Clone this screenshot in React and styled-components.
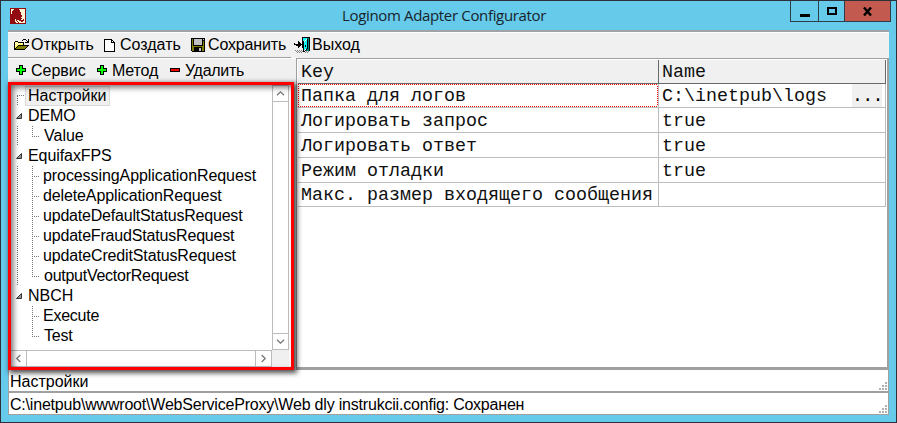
import React from "react";
import styled, { createGlobalStyle } from "styled-components";

const sans = '"Liberation Sans", Arial, sans-serif';

const GlobalStyle = createGlobalStyle`
  * { box-sizing: border-box; }
  body { margin: 0; overflow: hidden; }
`;

const Window = styled.div`
  width: 897px;
  height: 423px;
  padding: 0 7px 7px;
  border: 1px solid #2d3038;
  background: #66caea;
  color: #000;
  font: 16px/20px ${sans};
  white-space: nowrap;
  display: flex;
  flex-direction: column;
`;

const TitleBar = styled.header`
  position: relative;
  height: 29px;
  flex: none;
  display: flex;
  align-items: center;
  padding-left: 2px;
`;

const Title = styled.h1`
  flex: 1;
  margin: 0 27px 0 0;
  text-align: center;
  font: 400 15px/28px "Open Sans", "Noto Sans", sans-serif;
  letter-spacing: -0.34px;
  padding-bottom: 1px;
  color: #17242b;
`;

const Controls = styled.div`
  position: absolute;
  top: 0;
  right: -2px;
  display: flex;
  height: 21px;
  border: 1px solid #2d3e48;
  border-top: 0;
`;

const Control = styled.button`
  width: ${(p) => p.$width}px;
  padding: 0;
  border: 0;
  border-left: ${(p) => (p.$first ? 0 : "1px solid #2d3e48")};
  background: ${(p) => (p.$danger ? "#c35a50" : "transparent")};
  display: flex;
  align-items: center;
  justify-content: center;
`;

const Client = styled.main`
  width: 881px;
  height: 385px;
  display: flex;
  flex-direction: column;
  background: #f0f0f0;
  border-top: 2px solid #a0a3a6;
`;

const Toolbar = styled.div`
  display: flex;
  align-items: center;
  height: ${(p) => p.$height}px;
  padding-left: ${(p) => p.$start}px;
  border-top: 1px solid #fff;
`;

const Tool = styled.button`
  display: flex;
  align-items: center;
  gap: ${(p) => p.$gap}px;
  width: ${(p) => p.$width}px;
  height: 20px;
  padding: 0;
  border: 0;
  background: none;
  color: #000;
  font: inherit;
  letter-spacing: ${(p) => p.$spacing || 0}px;
`;

const Icon = styled.svg`
  display: block;
  flex: none;
  shape-rendering: crispEdges;
`;

const Workspace = styled.div`
  display: flex;
  height: 313px;
`;

const LeftPane = styled.section`
  width: 288px;
  flex: none;
`;

const Rule = styled.div`
  width: 283px;
  height: 1px;
  background: #a0a0a0;
`;

const TreeFrame = styled.div`
  position: relative;
  z-index: 1;
  width: 286px;
  height: 288px;
  border: 3px solid #f00;
  box-shadow: 2px 2px 5px 1px rgba(0, 0, 0, 0.7);
  background: #fff;
  display: grid;
  grid-template: 265px 17px / 261px 19px;

  &::after {
    content: "";
    position: absolute;
    inset: 0;
    box-shadow: inset 3px 3px 6px -1px rgba(0, 0, 0, 0.6);
    pointer-events: none;
  }
`;

const Tree = styled.ul`
  margin: 0;
  padding: 1px 0 0 5px;
  list-style: none;
`;

const TreeRow = styled.li`
  height: 20px;
  display: flex;
  align-items: center;
`;

const Branch = styled.svg`
  width: ${(p) => (p.$child ? 27 : 12)}px;
  height: 20px;
  flex: none;
`;

const TreeLabel = styled.span`
  height: 20px;
  padding: 0 3px 0 ${(p) => (p.$selected ? 2 : 0)}px;
  margin-left: ${(p) => p.$offset || 0}px;
  border: ${(p) => (p.$selected ? "1px solid #dadada" : 0)};
  background: ${(p) => (p.$selected ? "#f0f0f0" : "transparent")};
  line-height: ${(p) => (p.$selected ? 18 : 20)}px;
  letter-spacing: ${(p) => p.$spacing || 0}px;
`;

const Scrollbar = styled.div`
  display: flex;
  flex-direction: ${(p) => (p.$vertical ? "column" : "row")};
  justify-content: space-between;
  width: ${(p) => (p.$vertical ? 17 : 261)}px;
  height: ${(p) => (p.$vertical ? 265 : 17)}px;
  border: 1px solid #bcbcbc;
  border-left-width: ${(p) => (p.$vertical ? 1 : 0)}px;
`;

const ScrollButton = styled.span`
  width: 15px;
  height: 15px;
  display: flex;
  align-items: center;
  justify-content: center;
  box-shadow: ${(p) => p.$edge} 0 0 #bcbcbc;
`;

const Corner = styled.div`
  width: 17px;
  height: 17px;
  background: #f0f0f0;
`;

const GridPanel = styled.section`
  width: 593px;
  height: 312px;
  margin-top: 1px;
  border: 1px solid #a0a0a0;
  border-right-width: 2px;
  border-bottom-width: 3px;
  background: #fff;
  padding: 1px 0 0 1px;
`;

const Table = styled.div`
  display: grid;
  grid-template-columns: 361px 227px;
  grid-template-rows: 24px 24px 25px 25px 25px 24px;
  width: 588px;
  font: 18.33px/25px "Liberation Mono", "Courier New", monospace;
`;

const Cell = styled.div`
  position: relative;
  display: flex;
  justify-content: space-between;
  min-width: 0;
  padding-left: 3px;
  border-right: 1px solid ${(p) => (p.$header ? "#696969" : "#bdbdbd")};
  border-bottom: 1px solid ${(p) => (p.$header ? "#696969" : "#bdbdbd")};
  background: ${(p) => (p.$header ? "#f0f0f0" : "#fff")};
  color: #101010;
  line-height: ${(p) => (p.$tall ? 27 : 25)}px;
`;

const dotsX = "repeating-linear-gradient(90deg, #f00 0 1px, #fff 1px 2px)";
const dotsY = "repeating-linear-gradient(180deg, #f00 0 1px, #fff 1px 2px)";

const FocusRing = styled.i`
  position: absolute;
  inset: 0;
  background:
    ${dotsX} 0 0 / 100% 1px no-repeat,
    ${dotsX} 0 100% / 100% 1px no-repeat,
    ${dotsY} 0 0 / 1px 100% no-repeat,
    ${dotsY} 100% 0 / 1px 100% no-repeat;
`;

const Ellipsis = styled.button`
  width: 30px;
  height: 23px;
  margin-right: 3px;
  border: 0;
  padding: 0;
  background: #f0f0f0;
  color: #000;
  font: inherit;
  letter-spacing: -0.8px;
  text-align: left;
`;

const Status = styled.footer`
  display: flex;
  justify-content: space-between;
  align-items: flex-end;
  height: ${(p) => p.$height}px;
  padding-left: 1px;
  border: 1px solid #a0a0a0;
  border-top: 0;
  border-bottom-width: ${(p) => p.$bottom}px;
  background: #fff;
  line-height: 18px;
  letter-spacing: ${(p) => p.$spacing || 0}px;
`;

function AppLogo() {
  return (
    <Icon width="16" height="16" viewBox="0 0 16 16">
      <path fill="#930b12" d="M0 0h16v16H0z" />
      <path fill="#fff4cf" d="M1 1h14v14H1z" />
      <path fill="#930b12" d="M4 1h5v1h1v2h1v3h1v2h-1v1h1v1h-1v1h2v-1h1v2h-1v1h-2v-1H9v-1H7v1h1v1h1v1H1V6h1V3h1V2h1z" />
      <path fill="#fff4cf" d="M5 11h1v2h1v1h1v1H6v-1H5z" />
    </Icon>
  );
}

function FolderIcon() {
  return (
    <Icon width="16" height="16" viewBox="0 0 16 16">
      <path fill="#000" d="M9 2h3v1H9zM8 3h1v1H8zM12 3h1v1h-1zM14 2h1v4h-4V5h2V4h1zM1 4h3v1H1zM0 5h1v8H0zM4 5h6v3h5v1h-1v1h-1v1h-1v1h-1v1H0v-1h1v-1h1v-1h1V9h1V8h5V6H4z" />
      <path fill="#ffff55" d="M1 5h3v1h5v2H4v1H3v1H2v1H1z" />
      <path fill="#fff" d="M2 5h1v1H2zM1 6h1v1H1zM3 6h1v1H3zM5 6h1v1H5zM7 6h1v1H7zM2 7h1v1H2zM4 7h1v1H4zM1 8h1v1H1z" />
      <path fill="#808000" d="M4 9h9v1h-1v1h-1v1H2v-1h1v-1h1z" />
    </Icon>
  );
}

function PageIcon() {
  return (
    <Icon width="11" height="13" viewBox="0 0 11 13">
      <path fill="#000" d="M0 0h8v1h1v1h1v1h1v10H0z" />
      <path fill="#fff" d="M1 1h6v3h3v8H1zM8 2h1v1H8z" />
    </Icon>
  );
}

function DiskIcon() {
  return (
    <Icon width="14" height="14" viewBox="0 0 14 14">
      <path fill="#000" d="M0 0h14v14H1v-1H0z" />
      <path fill="#808000" d="M1 1h1v7h10V3h1v10h-2V9H3v4H1z" />
      <path fill="#c0c0c0" d="M3 1h8v6H3zM12 1h1v1h-1zM8 10h2v3H8z" />
    </Icon>
  );
}

function DoorIcon() {
  return (
    <Icon width="17" height="16" viewBox="0 0 17 16">
      <path fill="#000" d="M8 0h8v14h-1V1H9v10H8zM4 4h1v1h1v1h1v1h1v1H7v1H6v1H5v1H4V9H2V8H0V6h1v1h3z" />
      <path fill="#008080" d="M13 1h2v13h-3V4h1z" />
      <path fill="#0ff" d="M9 1h4v1h-1v1h-1v1h-1v1H9zM10 5h1V4h1V3h1v8h-1v1h-1v1h-1z" />
      <path fill="#000" d="M9 4h1v10h1v1H9zM11 13h1v1h-1zM12 12h1v1h-1zM13 2h1v10h-1zM11 8h1v2h-1z" />
      <path fill="#808080" d="M1 13h1v1H1zM3 13h1v1H3zM5 13h1v1H5zM7 13h1v1H7zM2 14h1v1H2zM4 14h1v1H4zM6 14h1v1H6zM8 14h1v1H8zM12 14h1v1h-1zM14 14h1v1h-1zM3 15h1v1H3zM5 15h1v1H5zM7 15h1v1H7zM11 15h1v1h-1zM13 15h1v1h-1z" />
    </Icon>
  );
}

function SignIcon({ minus }) {
  return (
    <Icon width="11" height="11" viewBox="0 0 11 11">
      {minus ? (
        <>
          <path d="M0 3h10v4H0z" />
          <path fill="#f00" d="M1 4h8v2H1z" />
        </>
      ) : (
        <>
          <path d="M3 0h4v3h3v4H7v3H3V7H0V3h3z" />
          <path fill="#0f0" d="M4 1h2v3h3v2H6v3H4V6H1V4h3z" />
        </>
      )}
    </Icon>
  );
}

function Chevron({ angle = 0 }) {
  return (
    <svg width="9" height="9" viewBox="0 0 9 9">
      <path d="M1 6.3 4.5 2.8 8 6.3" fill="none" stroke="#777" strokeWidth="1.3" transform={`rotate(${angle} 4.5 4.5)`} />
    </svg>
  );
}

function BranchLines({ item }) {
  const child = item.depth === 1;
  return (
    <Branch $child={child} viewBox={`0 0 ${child ? 27 : 12} 20`}>
      <g fill="none" stroke="#777" strokeDasharray="1 1" shapeRendering="crispEdges">
        {item.root && <path d="M1.5 10v10M1 9.5h7" />}
        {item.rail && <path d="M1.5 0v20" />}
        {child && <path d={`M16.5 0v${item.last ? 10 : 20}M16 10.5h7`} />}
      </g>
      {item.open && <path d="M5.5 7.5v5h-5z" fill="#999" stroke="#333" />}
    </Branch>
  );
}

function Grip() {
  return (
    <Icon width="9" height="9" viewBox="0 0 9 9">
      <path fill="#b0b0b0" d="M6 0h2v2H6zM3 3h2v2H3zM6 3h2v2H6zM0 6h2v2H0zM3 6h2v2H3zM6 6h2v2H6z" />
    </Icon>
  );
}

const nodes = [
  { text: "Настройки", root: true, selected: true },
  { text: "DEMO", open: true, spacing: -0.1 },
  { text: "Value", depth: 1, rail: true, last: true, offset: 1 },
  { text: "EquifaxFPS", open: true, spacing: -0.08 },
  { text: "processingApplicationRequest", depth: 1, rail: true, spacing: -0.08 },
  { text: "deleteApplicationRequest", depth: 1, rail: true, spacing: -0.12 },
  { text: "updateDefaultStatusRequest", depth: 1, rail: true, spacing: -0.2 },
  { text: "updateFraudStatusRequest", depth: 1, rail: true, spacing: -0.18 },
  { text: "updateCreditStatusRequest", depth: 1, rail: true, spacing: -0.15 },
  { text: "outputVectorRequest", depth: 1, rail: true, last: true, offset: 1, spacing: -0.26 },
  { text: "NBCH", open: true },
  { text: "Execute", depth: 1, spacing: -0.25 },
  { text: "Test", depth: 1, last: true, offset: 1, spacing: -0.25 },
];

const settings = [
  { key: "Логировать запрос", value: "true", tall: true },
  { key: "Логировать ответ", value: "true", tall: true },
  { key: "Режим отладки", value: "true", tall: true },
  { key: "Макс. размер входящего сообщения", value: "" },
];

export default function App() {
  return (
    <Window>
      <GlobalStyle />
      <TitleBar>
        <AppLogo />
        <Title>Loginom Adapter Configurator</Title>
        <Controls>
          <Control $width={27} $first aria-label="Minimize">
            <Icon width="10" height="11"><path d="M0 8h10v3H0z" /></Icon>
          </Control>
          <Control $width={26} aria-label="Maximize">
            <Icon width="10" height="8"><path fillRule="evenodd" d="M0 0h10v8H0zM2 2v4h6V2z" /></Icon>
          </Control>
          <Control $width={46} $danger aria-label="Close">
            <svg width="10" height="9"><path d="M1 .5 8 8.5M8 .5 1 8.5" stroke="#000" strokeWidth="2.4" /></svg>
          </Control>
        </Controls>
      </TitleBar>
      <Client>
        <Toolbar $height={25} $start={6}>
          <Tool $width={90} $gap={1}><FolderIcon />Открыть</Tool>
          <Tool $width={87} $gap={5}><PageIcon />Создать</Tool>
          <Tool $width={103} $gap={3} $spacing={-0.15}><DiskIcon />Сохранить</Tool>
          <Tool $width={70} $gap={1}><DoorIcon />Выход</Tool>
        </Toolbar>
        <Workspace>
          <LeftPane>
            <Rule />
            <Toolbar $height={24} $start={8}>
              <Tool $width={81} $gap={4}><SignIcon />Сервис</Tool>
              <Tool $width={73} $gap={4} $spacing={-0.15}><SignIcon />Метод</Tool>
              <Tool $width={80} $gap={4} $spacing={-0.3}><SignIcon minus />Удалить</Tool>
            </Toolbar>
            <TreeFrame>
              <Tree>
                {nodes.map((n) => (
                  <TreeRow key={n.text}>
                    <BranchLines item={n} />
                    <TreeLabel $selected={n.selected} $spacing={n.spacing} $offset={n.selected ? -3 : n.offset}>{n.text}</TreeLabel>
                  </TreeRow>
                ))}
              </Tree>
              <Scrollbar $vertical>
                <ScrollButton $edge="0 1px"><Chevron /></ScrollButton>
                <ScrollButton $edge="0 -1px"><Chevron angle={180} /></ScrollButton>
              </Scrollbar>
              <Scrollbar>
                <ScrollButton $edge="1px 0"><Chevron angle={-90} /></ScrollButton>
                <ScrollButton $edge="-1px 0"><Chevron angle={90} /></ScrollButton>
              </Scrollbar>
              <Corner />
            </TreeFrame>
          </LeftPane>
          <GridPanel>
            <Table>
              <Cell $header>Key</Cell>
              <Cell $header>Name</Cell>
              <Cell>Папка для логов<FocusRing /></Cell>
              <Cell>C:\inetpub\logs<Ellipsis>...</Ellipsis></Cell>
              {settings.map((row) => (
                <React.Fragment key={row.key}>
                  <Cell $tall={row.tall}>{row.key}</Cell>
                  <Cell $tall={row.tall}>{row.value}</Cell>
                </React.Fragment>
              ))}
            </Table>
          </GridPanel>
        </Workspace>
        <Status $height={23} $bottom={2}>Настройки<Grip /></Status>
        <Status $height={22} $bottom={1} $spacing={-0.2}>C:\inetpub\wwwroot\WebServiceProxy\Web dly instrukcii.config: Сохранен<Grip /></Status>
      </Client>
    </Window>
  );
}
